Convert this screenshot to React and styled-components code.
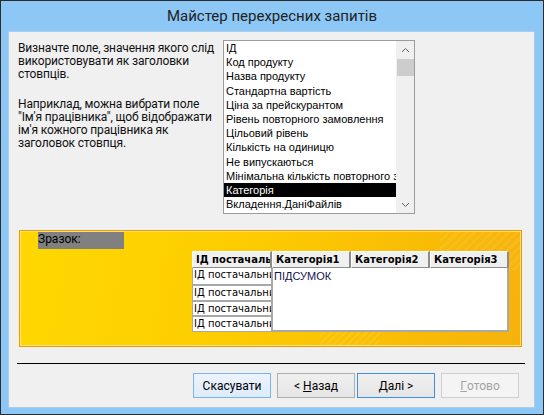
import React from 'react'
import styled, { createGlobalStyle } from 'styled-components'

const GlobalStyle = createGlobalStyle`
  html, body { margin: 0; padding: 0; background: #ffffff; }
  body { font-family: Roboto, "Noto Sans", sans-serif; }
`

const fields = [
  'ІД',
  'Код продукту',
  'Назва продукту',
  'Стандартна вартість',
  'Ціна за прейскурантом',
  'Рівень повторного замовлення',
  'Цільовий рівень',
  'Кількість на одиницю',
  'Не випускаються',
  'Мінімальна кількість повторного замовлення',
  'Категорія',
  'Вкладення.ДаніФайлів',
  'Вкладення.ІмяФайлу',
]

// Window chrome
const Window = styled.div`
  width: 544px;
  height: 415px;
  box-sizing: border-box;
  border: 1px solid #2b2b2b;
  background: #8cc7f5;
  display: flex;
  flex-direction: column;
`

const TitleBar = styled.div`
  height: 30px;
  display: flex;
  align-items: center;
  justify-content: center;
  font-size: 15px;
  color: #222;
`

const Client = styled.div`
  flex: 1;
  margin: 0 8px 6px 7px;
  background: #f0f0f0;
  box-shadow: inset 0 0 0 1px #a9cdec;
  display: flex;
  flex-direction: column;
`

// Top part
const Top = styled.div`
  display: flex;
  padding: 9px 0 0 10px;
`

const Instructions = styled.div`
  width: 205px;
  font-size: 12px;
  letter-spacing: -0.15px;
  line-height: 13px;
  color: #111;
  padding-top: 2px;
  white-space: nowrap;
`

const Para = styled.p`
  margin: 0 0 17px;
`

const ListBox = styled.div`
  width: 192px;
  height: 174px;
  box-sizing: border-box;
  border: 1px solid #9c9c9c;
  background: #fff;
  display: flex;
  overflow: hidden;
`

const Items = styled.div`
  flex: 1;
  overflow: hidden;
`

const Item = styled.div`
  height: 14.2px;
  line-height: 14px;
  padding-left: 2px;
  font-family: "Liberation Sans", sans-serif;
  font-size: 11px;
  white-space: nowrap;
  overflow: hidden;
  color: ${p => (p.$selected ? '#fff' : '#000')};
  background: ${p => (p.$selected ? '#000' : 'transparent')};
`

const ScrollBar = styled.div`
  width: 17px;
  display: flex;
  flex-direction: column;
  background: #f0f0f0;
  border-left: 1px solid #f0f0f0;
`

const ArrowBtn = styled.div`
  height: 17px;
  display: flex;
  align-items: center;
  justify-content: center;
  background: #f0f0f0;
`

const Track = styled.div`
  flex: 1;
  background: #f0f0f0;
`

const Thumb = styled.div`
  height: 17px;
  background: #cdcdcd;
  border-top: 1px solid #f0f0f0;
`

// Sample area
const Sample = styled.div`
  margin: 16px 0 0 11px;
  width: 503px;
  height: 117px;
  box-sizing: border-box;
  border: 1px solid #f39a00;
  box-shadow: inset 0 0 0 1px #ffe37a;
  background:
    repeating-linear-gradient(135deg, rgba(255,255,255,0.07) 0 3px, transparent 3px 6px) 420px 0 / 80px 40px no-repeat,
    repeating-linear-gradient(135deg, rgba(255,255,255,0.08) 0 2px, transparent 2px 5px) 300px 90px / 60px 25px no-repeat,
    linear-gradient(100deg, #ffd800 0%, #fdcc00 45%, #f9bb06 80%, #f6b20c 100%);
  padding: 1px 0 0 18px;
  display: flex;
  flex-direction: column;
  align-items: flex-start;
`

const SampleLabel = styled.div`
  width: 86px;
  height: 17px;
  background: #808080;
  font-size: 12px;
  line-height: 15px;
  color: #000;
`

const Sheet = styled.div`
  margin: 2px 0 0 154px;
  display: grid;
  grid-template-columns: 80px 79px 79px 79px;
  grid-template-rows: 17px 17px 16px 15px 16px;
  font-family: "DejaVu Sans", sans-serif;
  font-size: 10px;
`

const HeadCell = styled.div`
  box-sizing: border-box;
  background: #f0f0f0;
  border-top: 1px solid #fff;
  border-left: 1px solid #fff;
  border-right: 2px solid #8c8c8c;
  border-bottom: 1px solid #8c8c8c;
  font-weight: bold;
  line-height: 15px;
  padding-left: 3px;
  white-space: nowrap;
  overflow: hidden;
`

const RowCell = styled.div`
  box-sizing: border-box;
  background: #fff;
  border: 1px solid #a8a8a8;
  border-top-width: ${p => (p.$first ? '0' : '1px')};
  line-height: 14px;
  padding-left: 1px;
  white-space: nowrap;
  overflow: hidden;
`

const DataBox = styled.div`
  grid-column: 2 / 5;
  grid-row: 2 / 6;
  box-sizing: border-box;
  background: #fff;
  border-right: 2px solid #a8a8a8;
  border-bottom: 2px solid #a8a8a8;
  border-left: 1px solid #a8a8a8;
  font-size: 11px;
  font-family: "Liberation Sans", sans-serif;
  color: #141450;
  padding: 2px 0 0 1px;
`

// Bottom
const Divider = styled.div`
  margin: 16px 0 0 9px;
  width: 508px;
  height: 1px;
  background: #000;
`

const Buttons = styled.div`
  display: flex;
  margin: 9px 0 0 185px;
`

const Button = styled.div`
  width: 78px;
  height: 25px;
  box-sizing: border-box;
  margin-left: ${p => p.$gap || 0}px;
  display: flex;
  align-items: center;
  justify-content: center;
  font-size: 12px;
  border: 1px solid ${p => ({ hover: '#7eb4ea', primary: '#3c8fe6', disabled: '#cfcfcf' }[p.$kind] || '#adadad')};
  background: ${p => ({ hover: 'linear-gradient(#ecf4fc, #dcecfc)', disabled: '#f4f4f4' }[p.$kind] || 'linear-gradient(#f0f0f0, #e5e5e5)')};
  color: ${p => (p.$kind === 'disabled' ? '#a3a3a3' : '#000')};

  u { text-underline-offset: 1px; }
`

const Chevron = ({ up }) => (
  <svg width="9" height="6" viewBox="0 0 9 6">
    <polyline
      points={up ? '1,5 4.5,1.5 8,5' : '1,1 4.5,4.5 8,1'}
      fill="none"
      stroke="#606060"
      strokeWidth="1"
    />
  </svg>
)

export default function App() {
  return (
    <>
      <GlobalStyle />
      <Window>
        <TitleBar>Майстер перехресних запитів</TitleBar>
        <Client>
          <Top>
            <Instructions>
              <Para>
                Визначте поле, значення якого слід
                <br />
                використовувати як заголовки
                <br />
                стовпців.
              </Para>
              <Para>
                Наприклад, можна вибрати поле
                <br />
                "Ім'я працівника", щоб відображати
                <br />
                ім'я кожного працівника як
                <br />
                заголовок стовпця.
              </Para>
            </Instructions>
            <ListBox>
              <Items>
                {fields.map(f => (
                  <Item key={f} $selected={f === 'Категорія'}>
                    {f}
                  </Item>
                ))}
              </Items>
              <ScrollBar>
                <ArrowBtn>
                  <Chevron up />
                </ArrowBtn>
                <Thumb />
                <Track />
                <ArrowBtn>
                  <Chevron />
                </ArrowBtn>
              </ScrollBar>
            </ListBox>
          </Top>

          <Sample>
            <SampleLabel>Зразок:</SampleLabel>
            <Sheet>
              <HeadCell>ІД постачальника</HeadCell>
              <HeadCell>Категорія1</HeadCell>
              <HeadCell>Категорія2</HeadCell>
              <HeadCell>Категорія3</HeadCell>
              <RowCell $first>ІД постачальника</RowCell>
              <DataBox>ПІДСУМОК</DataBox>
              <RowCell>ІД постачальника</RowCell>
              <RowCell>ІД постачальника</RowCell>
              <RowCell>ІД постачальника</RowCell>
            </Sheet>
          </Sample>

          <Divider />
          <Buttons>
            <Button $kind="hover">Скасувати</Button>
            <Button $gap={6}>
              &lt;&nbsp;<u>Н</u>азад
            </Button>
            <Button $kind="primary" $gap={2}>
              <u>Д</u>алі&nbsp;&gt;
            </Button>
            <Button $kind="disabled" $gap={6}>
              <u>Г</u>отово
            </Button>
          </Buttons>
        </Client>
      </Window>
    </>
  )
}
